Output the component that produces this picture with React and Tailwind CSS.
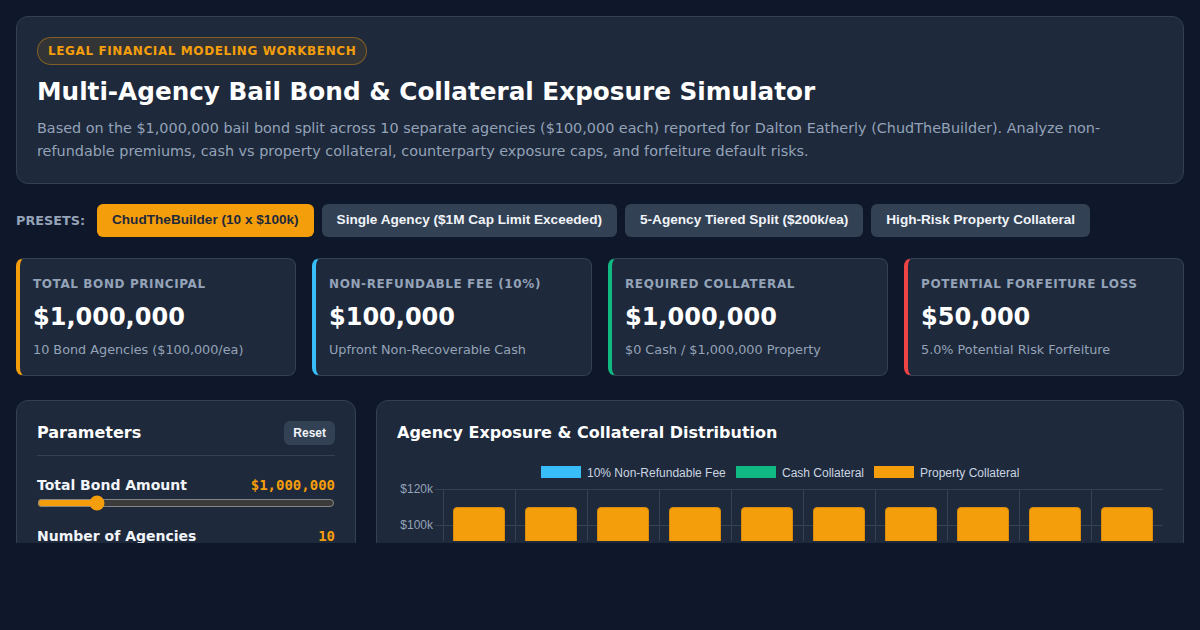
import React from "react";

const presets = [
  { label: "ChudTheBuilder (10 x $100k)", active: true },
  { label: "Single Agency ($1M Cap Limit Exceeded)" },
  { label: "5-Agency Tiered Split ($200k/ea)" },
  { label: "High-Risk Property Collateral" },
];

const stats = [
  { label: "Total Bond Principal", value: "$1,000,000", sub: "10 Bond Agencies ($100,000/ea)", border: "border-l-[#f59e0b]" },
  { label: "Non-Refundable Fee (10%)", value: "$100,000", sub: "Upfront Non-Recoverable Cash", border: "border-l-[#38bdf8]" },
  { label: "Required Collateral", value: "$1,000,000", sub: "$0 Cash / $1,000,000 Property", border: "border-l-[#10b981]" },
  { label: "Potential Forfeiture Loss", value: "$50,000", sub: "5.0% Potential Risk Forfeiture", border: "border-l-[#ef4444]" },
];

function Chart() {
  const top = 28;
  const per = 1.8; // px per $1k
  const y = (k) => top + (120 - k) * per;
  const gridY = [120, 100, 80, 60, 40, 20, 0];
  const cats = Array.from({ length: 10 }, (_, i) => i);
  const font = "'Liberation Sans', Arial, sans-serif";
  return (
    <svg width="766" height="80" viewBox="0 0 766 80" className="block">
      {/* legend */}
      <rect x="144" y="5" width="40" height="12" fill="#38bdf8" />
      <text x="190" y="15.5" fontSize="12" fill="#cbd5e1" fontFamily={font}>10% Non-Refundable Fee</text>
      <rect x="339" y="5" width="40" height="12" fill="#10b981" />
      <text x="385" y="15.5" fontSize="12" fill="#cbd5e1" fontFamily={font}>Cash Collateral</text>
      <rect x="477" y="5" width="40" height="12" fill="#f59e0b" />
      <text x="523" y="15.5" fontSize="12" fill="#cbd5e1" fontFamily={font}>Property Collateral</text>
      {/* grid */}
      {gridY.map((k) => (
        <line key={k} x1="38" x2="766" y1={y(k) + 0.5} y2={y(k) + 0.5} stroke="#334155" strokeWidth="1" />
      ))}
      {[120, 100].map((k) => (
        <text key={k} x="36" y={y(k) + 4} fontSize="12" textAnchor="end" fill="#94a3b8" fontFamily={font}>
          {"$" + k + "k"}
        </text>
      ))}
      {Array.from({ length: 11 }, (_, i) => (
        <line key={i} x1={46.5 + i * 72} x2={46.5 + i * 72} y1={top} y2="252" stroke="#334155" strokeWidth="1" />
      ))}
      {cats.map((i) => {
        const x = 56 + i * 72;
        const t = y(110);
        const b = y(10);
        const w = 52;
        const r = 4;
        return (
          <g key={i}>
            <rect x={x} y={b} width={w} height={y(0) - b} fill="#38bdf8" />
            <path
              d={`M${x + 0.5} ${b} L${x + 0.5} ${t + r} Q${x + 0.5} ${t + 0.5} ${x + r} ${t + 0.5} L${x + w - r} ${t + 0.5} Q${x + w - 0.5} ${t + 0.5} ${x + w - 0.5} ${t + r} L${x + w - 0.5} ${b}`}
              fill="#f59e0b"
              stroke="#d98a0b"
              strokeWidth="1"
            />
          </g>
        );
      })}
    </svg>
  );
}

export default function App() {
  return (
    <div className="min-h-screen bg-[#0f172a] font-['DejaVu_Sans',sans-serif] text-slate-100">
      <div className="h-[543px] overflow-hidden px-4 pt-4">
        {/* Header */}
        <div className="rounded-xl border border-[#334155] bg-[#1e293b] px-5 pt-5 pb-5">
          <div className="inline-flex items-center rounded-full border border-[#f59e0b]/40 bg-[#f59e0b]/10 px-2.5 py-[4px] text-xs font-bold leading-[18px] tracking-wider text-[#f59e0b]">
            LEGAL FINANCIAL MODELING WORKBENCH
          </div>
          <h1 className="mt-3 text-[24.7px] font-bold leading-[30px] text-white">
            Multi-Agency Bail Bond &amp; Collateral Exposure Simulator
          </h1>
          <p className="mt-2.5 text-[14.4px] leading-[23px] text-[#94a3b8]">
            Based on the $1,000,000 bail bond split across 10 separate agencies ($100,000 each) reported for Dalton Eatherly (ChudTheBuilder). Analyze non-refundable premiums, cash vs property collateral, counterparty exposure caps, and forfeiture default risks.
          </p>
        </div>

        {/* Presets */}
        <div className="mt-5 flex items-center gap-2">
          <span className="mr-1 text-[12.8px] font-bold text-[#94a3b8]">PRESETS:</span>
          {presets.map((p) => (
            <button
              key={p.label}
              className={
                "h-[33px] rounded-md px-[15px] font-['Liberation_Sans',Arial,sans-serif] text-[13.6px] font-bold " +
                (p.active ? "bg-[#f59e0b] text-[#1e293b]" : "bg-[#334155] text-[#f1f5f9]")
              }
            >
              {p.label}
            </button>
          ))}
        </div>

        {/* Stats */}
        <div className="mt-[21px] grid grid-cols-4 gap-4">
          {stats.map((s) => (
            <div key={s.label} className={"rounded-lg border border-[#334155] border-l-4 bg-[#1e293b] pt-[17px] pb-[15px] pl-[13px] pr-4 " + s.border}>
              <div className="text-xs font-bold uppercase leading-4 tracking-wider text-[#94a3b8]">{s.label}</div>
              <div className="mt-[9px] text-2xl font-bold leading-8 text-white">{s.value}</div>
              <div className="mt-[7px] text-[12.8px] leading-5 text-[#94a3b8]">{s.sub}</div>
            </div>
          ))}
        </div>

        {/* Bottom */}
        <div className="mt-6 grid grid-cols-[340px_1fr] gap-5">
          <div className="rounded-xl border border-[#334155] bg-[#1e293b] p-5">
            <div className="flex items-center justify-between border-b border-[#334155] pb-2.5">
              <h2 className="text-base font-bold leading-6 text-white">Parameters</h2>
              <button className="rounded-md bg-[#334155] px-[9px] py-1 font-['Liberation_Sans',Arial,sans-serif] text-xs font-bold leading-4 text-[#f1f5f9]">
                Reset
              </button>
            </div>
            <div className="mt-[19px] flex items-center justify-between">
              <span className="text-sm font-bold leading-5 text-[#f1f5f9]">Total Bond Amount</span>
              <span className="font-['DejaVu_Sans_Mono',monospace] text-sm font-bold leading-5 text-[#f59e0b]">$1,000,000</span>
            </div>
            <input
              type="range"
              min="100000"
              max="5000000"
              step="50000"
              defaultValue="1000000"
              className="mt-0 block h-4 w-full accent-[#f59e0b] [color-scheme:dark]"
            />
            <div className="mt-[15px] flex items-center justify-between">
              <span className="text-sm font-bold leading-5 text-[#f1f5f9]">Number of Agencies</span>
              <span className="font-['DejaVu_Sans_Mono',monospace] text-sm font-bold leading-5 text-[#f59e0b]">10</span>
            </div>
          </div>
          <div className="rounded-xl border border-[#334155] bg-[#1e293b] p-5">
            <h2 className="text-base font-bold leading-6 text-white">Agency Exposure &amp; Collateral Distribution</h2>
            <div className="mt-4">
              <Chart />
            </div>
          </div>
        </div>
      </div>
    </div>
  );
}
